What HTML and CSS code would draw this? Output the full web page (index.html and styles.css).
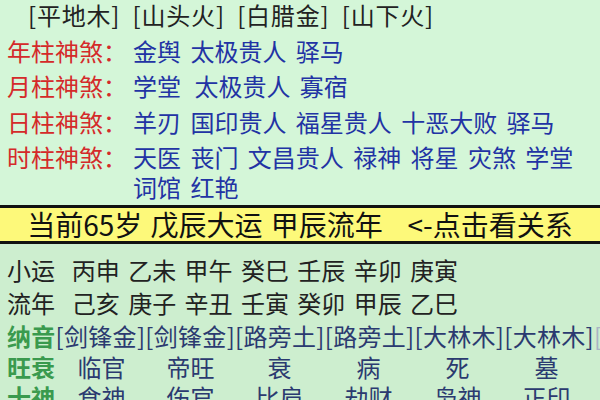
FILE: index.html
```html
<!DOCTYPE html>
<html lang="zh-CN">
<head>
<meta charset="utf-8">
<link rel="stylesheet" href="styles.css">
</head>
<body>
<div class="page">
  <section class="top">
    <div class="nayin-top">[平地木]  [山头火]  [白腊金]  [山下火]</div>
    <div class="shensha"><span class="label">年柱神煞：</span><span class="vals">金舆 太极贵人 驿马</span></div>
    <div class="shensha"><span class="label">月柱神煞：</span><span class="vals">学堂 <span class="gap"></span>太极贵人 寡宿</span></div>
    <div class="shensha"><span class="label">日柱神煞：</span><span class="vals">羊刃 国印贵人 福星贵人 十恶大败 驿马</span></div>
    <div class="shensha"><span class="label">时柱神煞：</span><span class="vals">天医 丧门 文昌贵人 禄神 将星 灾煞 学堂<br>词馆 红艳</span></div>
  </section>
  <div class="band">当前65岁 戊辰大运 甲辰流年   &lt;-点击看关系</div>
  <section class="bottom">
    <div class="line">小运  丙申 乙未 甲午 癸巳 壬辰 辛卯 庚寅</div>
    <div class="line">流年  己亥 庚子 辛丑 壬寅 癸卯 甲辰 乙巳</div>
    <div class="line nayin"><span class="glabel">纳音</span><span class="navy">[剑锋金][剑锋金][路旁土][路旁土][大林木][大林木]</span><span class="fade">[</span></div>
    <div class="grid-row"><span class="glabel">旺衰</span><span>临官</span><span>帝旺</span><span>衰</span><span>病</span><span>死</span><span>墓</span></div>
    <div class="grid-row"><span class="glabel">十神</span><span>食神</span><span>伤官</span><span>比肩</span><span>劫财</span><span>枭神</span><span>正印</span></div>
  </section>
</div>
</body>
</html>
```

FILE: styles.css
```css
html, body {
  margin: 0;
  padding: 0;
  width: 600px;
  height: 400px;
  overflow: hidden;
  background: #cdeecf;
}
.page {
  font-family: "Noto Sans CJK SC", "Noto Sans", sans-serif;
  font-size: 24px;
}
.top {
  background: #d4f6d8;
  padding: 0 0 3px 7px;
  display: flex;
  flex-direction: column;
  gap: 5.5px;
}
.nayin-top {
  white-space: pre;
  line-height: 30px;
  color: #222;
  padding-left: 21px;
  letter-spacing: 0.8px;
}
.shensha {
  display: flex;
  line-height: 30px;
}
.label {
  color: #d42a2a;
  flex: none;
}
.vals {
  white-space: pre;
  color: #2233a4;
  padding-left: 6px;
  word-spacing: 4px;
}
.gap {
  display: inline-block;
  width: 4px;
}
.band {
  white-space: pre;
  background: #fdf97a;
  border-top: 3px solid #111;
  border-bottom: 3px solid #111;
  height: 33px;
  line-height: 33px;
  font-size: 28px;
  word-spacing: 2px;
  text-align: center;
  color: #111;
}
.bottom {
  background: #cdeecf;
  padding: 8.5px 0 0 7px;
}
.line {
  white-space: pre;
  line-height: 33px;
  color: #222;
  word-spacing: 3px;
}
.nayin {
  word-spacing: 0;
  letter-spacing: 0.3px;
}
.glabel {
  color: #3a9a4e;
  font-weight: bold;
}
.navy {
  color: #2b3a70;
}
.fade {
  color: #a9b4c4;
}
.grid-row {
  display: grid;
  grid-template-columns: 50px repeat(6, 89px);
  line-height: 30px;
  color: #2b3a70;
}
.grid-row span {
  text-align: center;
}
.grid-row .glabel {
  text-align: left;
}
```
